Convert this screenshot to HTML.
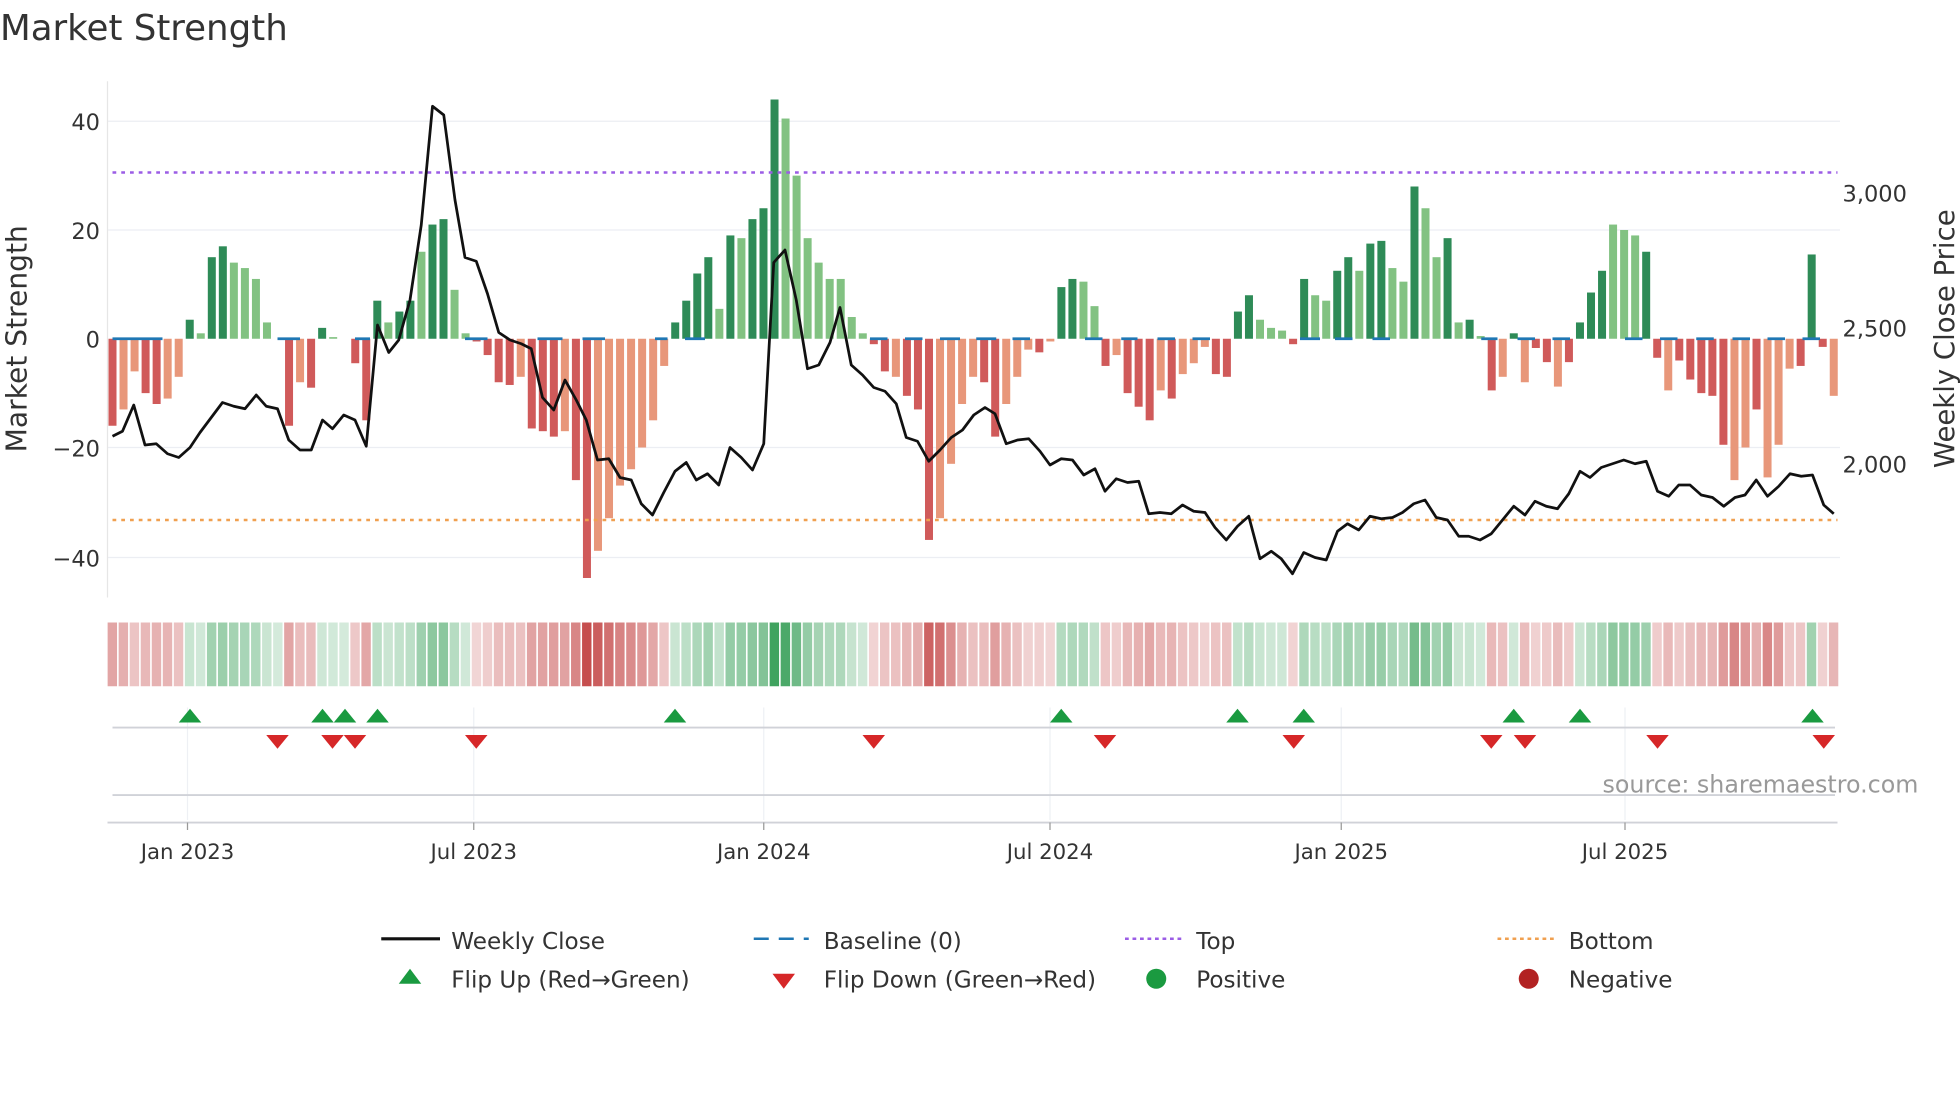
<!DOCTYPE html>
<html><head><meta charset="utf-8"><style>
html,body{margin:0;padding:0;background:#fff;width:1960px;height:1102px;overflow:hidden}
svg{display:block;font-family:"DejaVu Sans","Liberation Sans",sans-serif}
</style></head><body>
<svg id="s" width="1960" height="1102" viewBox="0 0 1568 881.6" xmlns="http://www.w3.org/2000/svg">
<rect width="1568" height="882" fill="#fff"/>
<text x="0" y="32" font-size="28.5" fill="#333">Market Strength</text>
<g stroke="#eceef3" stroke-width="1">
<line x1="86" y1="97" x2="1472" y2="97"/><line x1="86" y1="184" x2="1472" y2="184"/>
<line x1="86" y1="358" x2="1472" y2="358"/><line x1="86" y1="446" x2="1472" y2="446"/>
</g>
<line x1="86" y1="65" x2="86" y2="478" stroke="#e6e6e6"/>
<g id="bars"></g>
<line x1="90" y1="138" x2="1470" y2="138" stroke="#9b5de5" stroke-width="2" stroke-dasharray="3,4"/>
<line x1="90" y1="416" x2="1470" y2="416" stroke="#f0a050" stroke-width="2" stroke-dasharray="3,4"/>
<polyline id="price" fill="none" stroke="#111" stroke-width="2.2" stroke-linejoin="round"/>
<g font-size="18" fill="#333" text-anchor="end">
<text x="80" y="104">40</text><text x="80" y="191">20</text><text x="80" y="278">0</text>
<text x="80" y="365">−20</text><text x="80" y="453">−40</text>
</g>
<g font-size="18" fill="#333">
<text x="1474" y="161">3,000</text><text x="1474" y="269">2,500</text><text x="1474" y="378">2,000</text>
</g>
<text transform="translate(21,271) rotate(-90)" font-size="22.5" fill="#333" text-anchor="middle">Market Strength</text>
<text transform="translate(1563,271) rotate(-90)" font-size="22" fill="#333" text-anchor="middle">Weekly Close Price</text>
<g id="heat"></g>
<g stroke="#eef0f4"><line x1="150" y1="566" x2="150" y2="656"/><line x1="379" y1="566" x2="379" y2="656"/><line x1="611" y1="566" x2="611" y2="656"/><line x1="840" y1="566" x2="840" y2="656"/><line x1="1073" y1="566" x2="1073" y2="656"/><line x1="1300" y1="566" x2="1300" y2="656"/></g>
<line x1="90" y1="582" x2="1468" y2="582" stroke="#d0d2d8" stroke-width="1.5"/>
<line x1="90" y1="636" x2="1468" y2="636" stroke="#d0d2d8" stroke-width="1.5"/>
<line x1="86" y1="658" x2="1470" y2="658" stroke="#d0d2d8" stroke-width="1.5"/>
<g stroke="#999"><line x1="150" y1="658" x2="150" y2="664"/><line x1="379" y1="658" x2="379" y2="664"/><line x1="611" y1="658" x2="611" y2="664"/><line x1="840" y1="658" x2="840" y2="664"/><line x1="1073" y1="658" x2="1073" y2="664"/><line x1="1300" y1="658" x2="1300" y2="664"/></g>
<g id="marks"></g>
<text x="1282" y="634" font-size="19" fill="#999">source: sharemaestro.com</text>
<g font-size="17" fill="#333" text-anchor="middle">
<text x="150" y="687">Jan 2023</text><text x="379" y="687">Jul 2023</text><text x="611" y="687">Jan 2024</text>
<text x="840" y="687">Jul 2024</text><text x="1073" y="687">Jan 2025</text><text x="1300" y="687">Jul 2025</text>
</g>
<g font-size="18.5" fill="#333">
<line x1="305" y1="751" x2="352" y2="751" stroke="#111" stroke-width="2.5"/>
<text x="361" y="759">Weekly Close</text>
<line x1="603" y1="751" x2="647" y2="751" stroke="#1f77b4" stroke-width="2" stroke-dasharray="12,8"/>
<text x="659" y="759">Baseline (0)</text>
<line x1="900" y1="751" x2="945" y2="751" stroke="#9b5de5" stroke-width="2" stroke-dasharray="3,3"/>
<text x="957" y="759">Top</text>
<line x1="1198" y1="751" x2="1243" y2="751" stroke="#f0a050" stroke-width="2" stroke-dasharray="3,3"/>
<text x="1255" y="759">Bottom</text>
<polygon points="319,787 337,787 328,775" fill="#1a9a40"/>
<text x="361" y="790">Flip Up (Red→Green)</text>
<polygon points="618,779 636,779 627,791" fill="#d62728"/>
<text x="659" y="790">Flip Down (Green→Red)</text>
<circle cx="925" cy="783" r="8" fill="#1a9a40"/>
<text x="957" y="790">Positive</text>
<circle cx="1223" cy="783" r="8" fill="#b22222"/>
<text x="1255" y="790">Negative</text>
</g>
</svg>
<script>
var v=[-16,-13,-6,-10,-12,-11,-7,3.5,1,15,17,14,13,11,3,0,-16,-8,-9,2,0.3,0,-4.5,-15,7,3,5,7,16,21,22,9,1,-0.5,-3,-8,-8.5,-7,-16.5,-17,-18,-17,-26,-44,-39,-33,-27,-24,-20,-15,-5,3,7,12,15,5.5,19,18.5,22,24,44,40.5,30,18.5,14,11,11,4,1,-1,-6,-7,-10.5,-13,-37,-33,-23,-12,-7,-8,-18,-12,-7,-2,-2.5,-0.5,9.5,11,10.5,6,-5,-3,-10,-12.5,-15,-9.5,-11,-6.5,-4.5,-1.5,-6.5,-7,5,8,3.5,2,1.5,-1,11,8,7,12.5,15,12.5,17.5,18,13,10.5,28,24,15,18.5,3,3.5,0.5,-9.5,-7,1,-8,-1.7,-4.3,-8.8,-4.3,3,8.5,12.5,21,20,19,16,-3.5,-9.5,-4,-7.5,-10,-10.5,-19.5,-26,-20,-13,-25.5,-19.5,-5.5,-5,15.5,-1.5,-10.5];
var dk=[0,3,4,7,9,10,16,18,19,22,23,24,26,27,29,30,33,34,35,36,38,39,40,42,43,51,52,53,54,56,58,59,60,69,70,72,73,74,79,80,84,86,87,90,92,93,94,96,100,101,102,103,107,108,111,112,114,115,118,121,123,125,127,129,130,132,133,134,135,139,140,142,143,144,145,146,149,153,154,155];
var dark={};dk.forEach(function(k){dark[k]=1});
var b="",h="",x0=90,dx=(1467-90)/(v.length-1),u=4.35,z=271;
for(var i=0;i<v.length;i++){var x=x0+i*dx,val=v[i],c;
if(val>0)c=dark[i]?"#2e8b57":"#82c282";else c=dark[i]?"#d05a5a":"#e8977a";
var hh=Math.abs(val)*u;if(hh>0.5)b+='<rect x="'+(x-3.2)+'" y="'+(val>0?z-hh:z)+'" width="6.4" height="'+hh+'" fill="'+c+'"/>';
var a=0.22+Math.min(Math.abs(val)/44,1)*0.75;
h+='<rect x="'+(x-3.9)+'" y="498" width="'+(dx-1.3)+'" height="51" fill="'+(val>=0?"#3aa05a":"#c44848")+'" fill-opacity="'+a.toFixed(2)+'"/>';}
[[90,130],[222,240],[284,296],[372,390],[430,450],[466,484],[524,534],[548,564],[696,710],[724,738],[752,768],[781,797],[810,824],[868,882],[897,910],[926,940],[954,968],[1040,1056],[1068,1082],[1098,1112],[1185,1198],[1214,1228],[1242,1256],[1300,1314],[1328,1342],[1357,1371],[1386,1400],[1414,1428],[1442,1456]].forEach(function(p){b+='<line x1="'+p[0]+'" y1="271" x2="'+p[1]+'" y2="271" stroke="#1f77b4" stroke-width="2.2"/>'});
document.getElementById("bars").innerHTML=b;document.getElementById("heat").innerHTML=h;
document.getElementById("price").setAttribute("points","90,349 98,345 107,324 116,356 125,355 134,363 143,366 152,358 160,346 169,334 178,322 187,325 196,327 205,316 213,325 222,327 231,352 240,360 249,360 258,336 266,343 275,332 284,336 293,357 302,260 311,282 319,272 328,240 337,180 346,85 355,92 364,160 372,206 381,209 390,235 399,266 408,272 417,275 425,279 434,318 443,328 452,304 461,320 469,336 478,368 487,367 496,382 505,384 513,403 522,412 531,394 540,377 549,370 557,384 566,379 575,388 584,358 593,366 602,376 611,355 619,210 628,200 637,240 646,295 655,292 664,274 672,246 681,292 690,300 699,310 708,313 717,323 725,350 734,353 743,369 752,360 761,350 770,344 779,332 788,326 796,331 805,355 814,352 823,351 832,361 840,372 849,367 858,368 867,380 876,375 884,393 893,383 902,386 911,385 919,411 928,410 937,411 946,404 955,409 964,410 972,422 981,432 990,421 999,413 1008,447 1017,441 1025,447 1034,459 1043,442 1052,446 1061,448 1070,425 1078,419 1087,424 1096,413 1105,415 1114,414 1122,410 1131,403 1140,400 1149,414 1158,416 1167,429 1175,429 1184,432 1193,427 1202,416 1211,405 1220,412 1228,401 1237,405 1246,407 1255,395 1264,377 1272,382 1281,374 1290,371 1299,368 1308,371 1317,369 1326,393 1335,397 1343,388 1352,388 1361,396 1370,398 1379,405 1388,398 1396,396 1405,384 1414,397 1423,389 1432,379 1441,381 1450,380 1459,404 1467,411");
var m="";[152,258,276,302,540,849,990,1043,1211,1264,1450].forEach(function(x){m+='<polygon points="'+(x-9)+',578 '+(x+9)+',578 '+x+',567" fill="#1a9a40"/>'});
[222,266,284,381,699,884,1035,1193,1220,1326,1459].forEach(function(x){m+='<polygon points="'+(x-9)+',588 '+(x+9)+',588 '+x+',599" fill="#d62728"/>'});
document.getElementById("marks").innerHTML=m;
</script>
</body></html>
